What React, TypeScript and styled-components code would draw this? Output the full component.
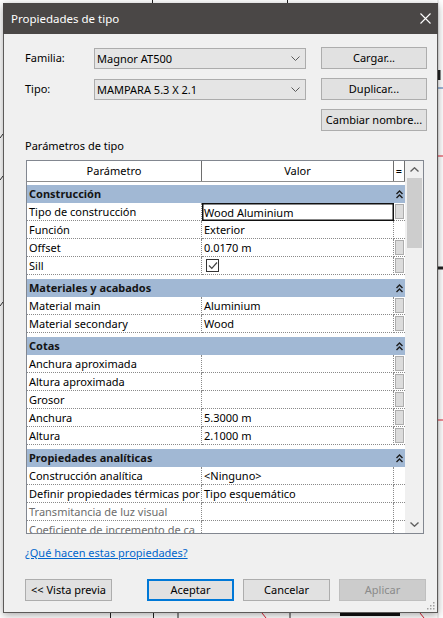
import styled, { createGlobalStyle } from 'styled-components'

const GlobalStyle = createGlobalStyle`
  html, body {
    margin: 0;
    padding: 0;
    background: #ffffff;
  }
  body {
    font-family: 'Noto Sans', 'Liberation Sans', sans-serif;
    font-size: 11px;
    color: #000;
  }
  * {
    box-sizing: border-box;
  }
`

type Row = {
  name: string
  value?: string
  check?: boolean
  btn?: boolean
  disabled?: boolean
  selected?: boolean
}

type Group = { title: string; rows: Row[] }

const groups: Group[] = [
  {
    title: 'Construcción',
    rows: [
      { name: 'Tipo de construcción', value: 'Wood Aluminium', btn: true, selected: true },
      { name: 'Función', value: 'Exterior' },
      { name: 'Offset', value: '0.0170 m', btn: true },
      { name: 'Sill', check: true, btn: true }
    ]
  },
  {
    title: 'Materiales y acabados',
    rows: [
      { name: 'Material main', value: 'Aluminium', btn: true },
      { name: 'Material secondary', value: 'Wood', btn: true }
    ]
  },
  {
    title: 'Cotas',
    rows: [
      { name: 'Anchura aproximada', btn: true },
      { name: 'Altura aproximada', btn: true },
      { name: 'Grosor', btn: true },
      { name: 'Anchura', value: '5.3000 m', btn: true },
      { name: 'Altura', value: '2.1000 m', btn: true }
    ]
  },
  {
    title: 'Propiedades analíticas',
    rows: [
      { name: 'Construcción analítica', value: '<Ninguno>' },
      { name: 'Definir propiedades térmicas por', value: 'Tipo esquemático' },
      { name: 'Transmitancia de luz visual', disabled: true },
      { name: 'Coeficiente de incremento de ca', disabled: true }
    ]
  }
]

const ChevronDown = () => (
  <svg width="9" height="5" viewBox="0 0 9 5">
    <path d="M0.5 0.5 L4.5 4.5 L8.5 0.5" fill="none" stroke="#5a5a5a" strokeWidth="1" />
  </svg>
)

const DoubleUp = () => (
  <svg width="7" height="9" viewBox="0 0 7 9">
    <path d="M0.5 4 L3.5 1 L6.5 4 M0.5 8 L3.5 5 L6.5 8" fill="none" stroke="#1c1c1c" strokeWidth="1.4" />
  </svg>
)

const App = () => {
  return (
    <Page>
      <GlobalStyle />
      <Backdrop width="443" height="618" viewBox="0 0 443 618">
        <path d="M152.5 0 V4 M287.5 0 V4" stroke="#222" strokeWidth="1" />
        <path d="M438 0 V618" stroke="#ddd" strokeWidth="1" />
        <path d="M439 70 V80" stroke="#222" strokeWidth="3" />
        <path d="M437 88 H443" stroke="#3a6fb0" strokeWidth="1" />
        <path d="M437 156 H443 M437 420 H443" stroke="#d23" strokeWidth="1" />
        <path d="M437 268 H443" stroke="#222" strokeWidth="3" />
        <path d="M0 138 L3 134 M0 180 L3 176 M0 306 L3 302" stroke="#333" strokeWidth="1" />
        <path d="M110.5 613 V618 M153.5 613 V618 M178 613 V618 M290 613 V618" stroke="#222" strokeWidth="1" />
        <path d="M340 614 H400" stroke="#111" strokeWidth="4" />
        <path d="M262 613 L266 618 M420 613 L424 618" stroke="#d23" strokeWidth="1" />
      </Backdrop>
      <Dialog>
        <TitleBar>
          <span>Propiedades de tipo</span>
          <Close width="11" height="11" viewBox="0 0 11 11">
            <path d="M0.5 0.5 L10.5 10.5 M10.5 0.5 L0.5 10.5" stroke="#fff" strokeWidth="1.1" />
          </Close>
        </TitleBar>
        <Body>
          <TopGrid>
            <FieldLabel>Familia:</FieldLabel>
            <Combo>
              <span>Magnor AT500</span>
              <ChevronDown />
            </Combo>
            <Button $width={106}>Cargar...</Button>
            <FieldLabel>Tipo:</FieldLabel>
            <Combo>
              <span>MAMPARA 5.3 X 2.1</span>
              <ChevronDown />
            </Combo>
            <Button $width={106}>Duplicar...</Button>
            <Button $width={106} $col={3}>
              Cambiar nombre...
            </Button>
          </TopGrid>

          <SectionLabel>Parámetros de tipo</SectionLabel>

          <Table>
            <Grid>
              <HeaderRow>
                <HeaderCell>Parámetro</HeaderCell>
                <HeaderCell>Valor</HeaderCell>
                <HeaderCell>=</HeaderCell>
              </HeaderRow>
              <GridBody>
                {groups.map((g, gi) => (
                  <div key={g.title}>
                    <Spacer $h={gi === 0 ? 3 : 4} />
                    <GroupRow>
                      <span>{g.title}</span>
                      <GroupIcon>
                        <DoubleUp />
                      </GroupIcon>
                    </GroupRow>
                    {g.rows.map((r) => (
                      <DataRow key={r.name}>
                        <NameCell $disabled={r.disabled}>{r.name}</NameCell>
                        <ValueCell $selected={r.selected}>
                          {r.check ? (
                            <CheckBox>
                              <svg width="10" height="9" viewBox="0 0 10 9">
                                <path d="M1 4.5 L3.8 7.3 L9 1.5" fill="none" stroke="#444" strokeWidth="1.2" />
                              </svg>
                            </CheckBox>
                          ) : (
                            r.value
                          )}
                        </ValueCell>
                        <EqCell>{r.btn && <EqButton />}</EqCell>
                      </DataRow>
                    ))}
                  </div>
                ))}
              </GridBody>
            </Grid>
            <ScrollBar>
              <ScrollArrow>
                <svg width="9" height="5" viewBox="0 0 9 5">
                  <path d="M0.5 4.5 L4.5 0.8 L8.5 4.5" fill="none" stroke="#606060" strokeWidth="1.4" />
                </svg>
              </ScrollArrow>
              <Thumb />
              <ScrollTrack />
              <ScrollArrow>
                <svg width="9" height="5" viewBox="0 0 9 5">
                  <path d="M0.5 0.5 L4.5 4.2 L8.5 0.5" fill="none" stroke="#606060" strokeWidth="1.4" />
                </svg>
              </ScrollArrow>
            </ScrollBar>
          </Table>

          <HelpLink href="#">¿Qué hacen estas propiedades?</HelpLink>

          <Footer>
            <Button $width={87}>&lt;&lt; Vista previa</Button>
            <FooterRight>
              <Button $width={87} $primary>
                Aceptar
              </Button>
              <Button $width={87}>Cancelar</Button>
              <Button $width={87} $disabled>
                Aplicar
              </Button>
            </FooterRight>
          </Footer>
        </Body>
        <Grip width="8" height="8" viewBox="0 0 8 8">
          <g fill="#a0a0a0">
            <rect x="6" y="0" width="1.5" height="1.5" />
            <rect x="3" y="3" width="1.5" height="1.5" />
            <rect x="6" y="3" width="1.5" height="1.5" />
            <rect x="0" y="6" width="1.5" height="1.5" />
            <rect x="3" y="6" width="1.5" height="1.5" />
            <rect x="6" y="6" width="1.5" height="1.5" />
          </g>
        </Grip>
      </Dialog>
    </Page>
  )
}

export default App

const Page = styled.div`
  position: relative;
  width: 443px;
  height: 618px;
  padding: 3px 0 0 3px;
  overflow: hidden;
  background: #fff;
`

const Backdrop = styled.svg`
  position: absolute;
  left: 0;
  top: 0;
`

const Dialog = styled.div`
  position: relative;
  width: 435px;
  height: 610px;
  background: #f0f0f0;
  border: 1px solid #5c5a59;
  border-top: none;
  box-shadow: 0 2px 8px rgba(0, 0, 0, 0.35);
  display: flex;
  flex-direction: column;
`

const TitleBar = styled.div`
  height: 31px;
  flex: none;
  background: #4a4746;
  color: #ffffff;
  font-size: 11.5px;
  display: flex;
  align-items: center;
  justify-content: space-between;
  padding: 0 7px 1px 8px;
  margin: 0 -1px;
`

const Close = styled.svg`
  display: block;
`

const Body = styled.div`
  flex: 1;
  display: flex;
  flex-direction: column;
  padding: 13px 10px 0 21px;
`

const TopGrid = styled.div`
  display: grid;
  grid-template-columns: 69px 212px 1fr;
  grid-auto-rows: 22px;
  row-gap: 9px;
  align-items: center;
`

const FieldLabel = styled.div`
  padding-bottom: 1px;
`

const Combo = styled.div`
  height: 21px;
  border: 1px solid #acacac;
  background: #e5e5e5;
  display: flex;
  align-items: center;
  justify-content: space-between;
  padding: 0 5px 0 2px;
`

const Button = styled.div<{ $width: number; $col?: number; $primary?: boolean; $disabled?: boolean }>`
  width: ${({ $width }) => $width}px;
  height: 22px;
  justify-self: end;
  grid-column: ${({ $col }) => ($col ? $col : 'auto')};
  display: flex;
  align-items: center;
  justify-content: center;
  background: ${({ $disabled }) => ($disabled ? '#cccccc' : '#e1e1e1')};
  color: ${({ $disabled }) => ($disabled ? '#8a8a8a' : '#000')};
  border: ${({ $primary, $disabled }) =>
    $primary ? '2px solid #0078d7' : $disabled ? '1px solid #bfbfbf' : '1px solid #adadad'};
  padding-bottom: 1px;
`

const SectionLabel = styled.div`
  margin-top: 8px;
  line-height: 14px;
  height: 14px;
`

const Table = styled.div`
  margin: 7px 0 0 1px;
  width: 398px;
  height: 374px;
  flex: none;
  border: 1px solid #828790;
  background: #fff;
  display: flex;
`

const Grid = styled.div`
  width: 378px;
  display: flex;
  flex-direction: column;
  overflow: hidden;
`

const HeaderRow = styled.div`
  display: grid;
  grid-template-columns: 175px 192px 11px;
  height: 21px;
  flex: none;
  border-bottom: 1px solid #8e8e8e;
`

const HeaderCell = styled.div`
  display: flex;
  align-items: center;
  justify-content: center;
  border-right: 1px solid #6e6e6e;
  padding-bottom: 1px;
  overflow: hidden;
`

const GridBody = styled.div`
  flex: 1;
  overflow: hidden;
`

const Spacer = styled.div<{ $h: number }>`
  height: ${({ $h }) => $h}px;
`

const GroupRow = styled.div`
  height: 18px;
  background: #a1b8d4;
  font-weight: 700;
  color: #141414;
  display: flex;
  align-items: center;
  justify-content: space-between;
  padding: 0 0 1px 2px;
`

const GroupIcon = styled.span`
  width: 11px;
  display: flex;
  justify-content: center;
  padding-top: 1px;
`

const DataRow = styled.div`
  display: grid;
  grid-template-columns: 175px 192px 11px;
  height: 18px;
`

const Cell = styled.div`
  border-right: 1px dotted #8a8a8a;
  border-bottom: 1px dotted #8a8a8a;
  display: flex;
  align-items: center;
  white-space: nowrap;
  overflow: hidden;
  padding-left: 2px;
`

const NameCell = styled(Cell)<{ $disabled?: boolean }>`
  color: ${({ $disabled }) => ($disabled ? '#6d6d6d' : '#000')};
`

const ValueCell = styled(Cell)<{ $selected?: boolean }>`
  ${({ $selected }) =>
    $selected &&
    `
    border: 1px solid #111;
    box-shadow: inset 0 0 0 0.5px #111;
    padding-left: 1px;
  `}
`

const EqCell = styled(Cell)`
  padding: 1px;
  border-right: none;
`

const EqButton = styled.div`
  width: 9px;
  height: 15px;
  background: #dcdcdc;
  border: 1px solid #adadad;
`

const CheckBox = styled.div`
  width: 13px;
  height: 13px;
  border: 1px solid #333;
  background: #fff;
  display: flex;
  align-items: center;
  justify-content: center;
  margin-left: 2px;
`

const ScrollBar = styled.div`
  width: 18px;
  background: #f0f0f0;
  display: flex;
  flex-direction: column;
`

const ScrollArrow = styled.div`
  height: 17px;
  flex: none;
  display: flex;
  align-items: center;
  justify-content: center;
`

const Thumb = styled.div`
  height: 70px;
  margin: 0 1px 0 2px;
  background: #cdcdcd;
  flex: none;
`

const ScrollTrack = styled.div`
  flex: 1;
`

const HelpLink = styled.a`
  margin-top: 12px;
  line-height: 14px;
  color: #0066cc;
  text-decoration: underline;
  align-self: flex-start;
`

const Footer = styled.div`
  margin-top: 19px;
  display: flex;
  justify-content: space-between;
  padding-right: 1px;
`

const FooterRight = styled.div`
  display: flex;
  gap: 9px;
`

const Grip = styled.svg`
  position: absolute;
  right: 2px;
  bottom: 2px;
`
